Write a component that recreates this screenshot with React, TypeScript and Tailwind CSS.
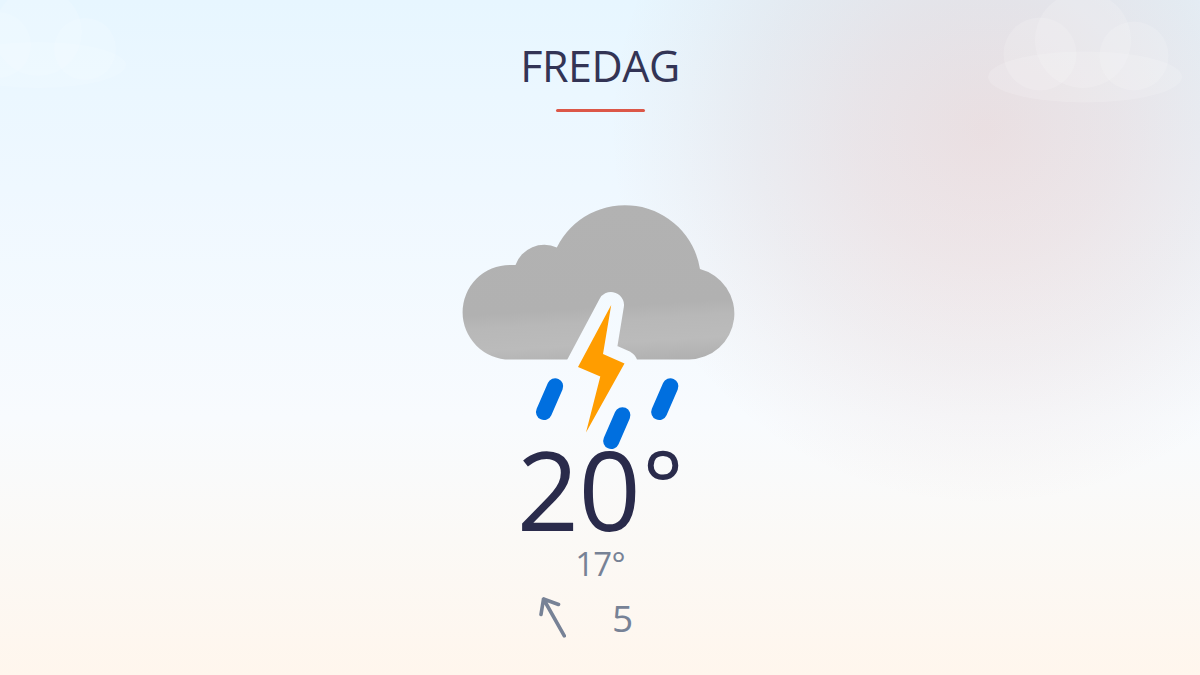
const day = {
    name: "FREDAG",
    high: "20",
    low: "17°",
    wind: "5",
}

function BackgroundClouds() {
    return (
        <svg className="absolute inset-0 h-full w-full" viewBox="0 0 1200 675" fill="#ffffff">
            <g fillOpacity="0.15">
                <ellipse cx="1085" cy="77" rx="97" ry="25.5" />
                <circle cx="1040" cy="54" r="36.5" />
                <circle cx="1083" cy="40" r="48" />
                <circle cx="1134" cy="56" r="34.5" />
            </g>
            <g fillOpacity="0.13">
                <ellipse cx="38" cy="65" rx="88" ry="23" />
                <circle cx="-2" cy="45" r="33" />
                <circle cx="38" cy="32" r="44" />
                <circle cx="85" cy="49" r="31" />
            </g>
        </svg>
    )
}

function ThunderIcon() {
    return (
        <svg className="h-[250px] w-[280px]" viewBox="460 202 280 250">
            <defs>
                <linearGradient id="shade" gradientUnits="userSpaceOnUse" x1="600" y1="205" x2="610" y2="364">
                    <stop offset="0" stopColor="#b2b2b2" />
                    <stop offset="0.64" stopColor="#b1b1b1" />
                    <stop offset="0.73" stopColor="#b8b8b8" />
                    <stop offset="0.87" stopColor="#bbbbbb" />
                    <stop offset="1" stopColor="#b0b0b0" />
                </linearGradient>
                <mask id="bolt-gap" maskUnits="userSpaceOnUse" x="460" y="200" width="280" height="260">
                    <rect x="460" y="200" width="280" height="260" fill="#fff" />
                    <path
                        d="M611 305L578 367L600 376.500L586 432.500L624.500 363.500L603 354Z"
                        fill="#000"
                        stroke="#000"
                        strokeWidth="26"
                        strokeLinejoin="round"
                    />
                </mask>
            </defs>
            <path
                d="M509.800 359.500A47.250 47.250 0 0 1 509.800 265L515.500 265A30.500 30.500 0 0 1 556.800 247.600A76 76 0 0 1 700 269A46 46 0 0 1 689 359.500Z"
                fill="url(#shade)"
                mask="url(#bolt-gap)"
            />
            <path d="M611.200 305L578 367L600.300 376.500L586 432.500L624.500 363.500L603 354Z" fill="#ff9d00" />
            <g stroke="#006fdf" strokeWidth="16" strokeLinecap="round">
                <path d="M555.200 386.300L544 412" />
                <path d="M622.400 415.200L611.200 441" />
                <path d="M670.400 386.300L659.200 412" />
            </g>
        </svg>
    )
}

export default function App() {
    return (
        <main className="relative h-[675px] w-[1200px] overflow-hidden bg-[radial-gradient(circle_at_985px_130px,rgba(218,76,48,0.14),rgba(205,78,54,0.11)_130px,rgba(180,80,60,0.07)_230px,rgba(180,90,70,0.03)_310px,rgba(200,100,80,0)_375px),linear-gradient(180deg,#e7f6ff_0%,#eff8ff_28%,#f8fbfe_62%,#fbf9f6_80%,#fff6ed_100%)] font-['Open_Sans','Noto_Sans',sans-serif]">
            <BackgroundClouds />
            <div className="relative flex flex-col items-center">
                <h1 className="mt-9 h-[60px] text-[43px] leading-[59px] tracking-[-0.5px] text-[#333455]">{day.name}</h1>
                <div className="mt-[13px] h-[3px] w-[89px] rounded-full bg-[#dc5748]"></div>
                <div className="mt-[90px] h-[236px]">
                    <ThunderIcon />
                </div>
                <div className="flex h-[106px] text-[109px] leading-[102px] tracking-[-0.5px] text-[#2a2b4b]">
                    {day.high}
                    <span className="ml-[2px] text-[97px] font-medium leading-[91px]">°</span>
                </div>
                <div className="h-10 text-[33px] leading-10 tracking-[-0.8px] text-[#778296]">{day.low}</div>
                <div className="mt-2 flex w-[124px] items-center justify-between">
                    <svg className="h-11 w-7" viewBox="538 595 28 44" fill="none" stroke="#778296" strokeWidth="3.6" strokeLinecap="round" strokeLinejoin="round">
                        <path d="M564.300 634.800L543.500 598M541 613.500L543.500 598L558.500 603.500" />
                    </svg>
                    <span className="w-[50px] text-[37px] leading-[51px] text-[#778296]">{day.wind}</span>
                </div>
            </div>
        </main>
    )
}
